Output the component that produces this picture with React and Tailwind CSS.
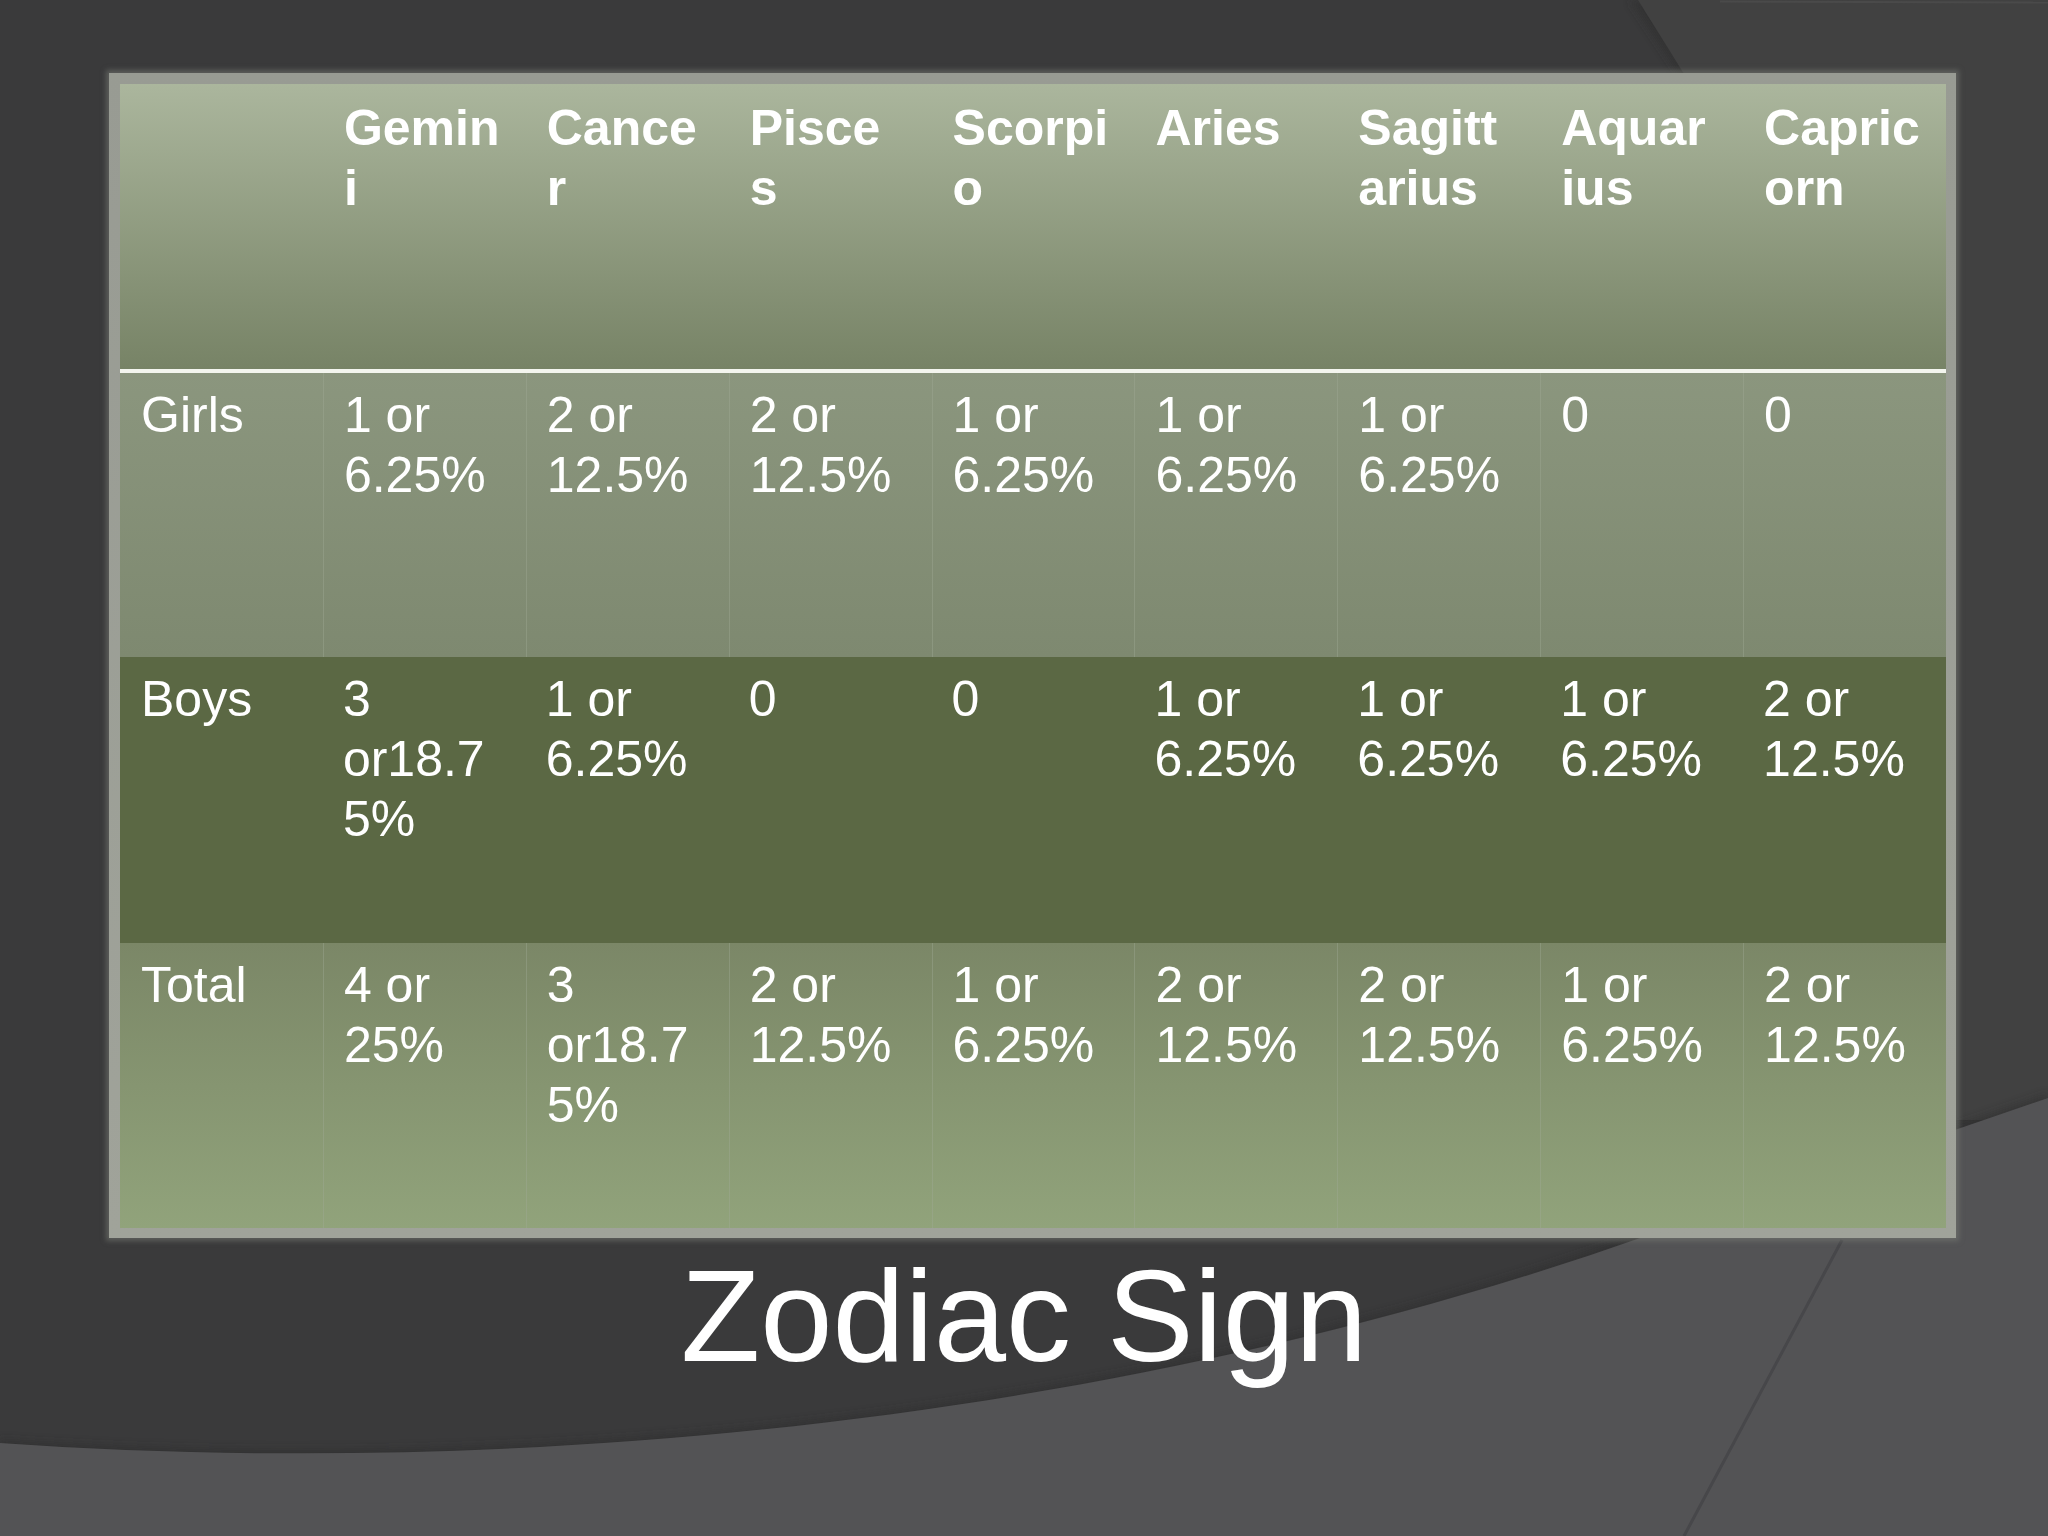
const columns = ['', 'Gemini', 'Cancer', 'Pisces', 'Scorpio', 'Aries', 'Sagittarius', 'Aquarius', 'Capricorn']

const rows = [
  {
    label: 'Girls',
    values: ['1 or 6.25%', '2 or 12.5%', '2 or 12.5%', '1 or 6.25%', '1 or 6.25%', '1 or 6.25%', '0', '0'],
    rowClass: 'h-[284px] bg-gradient-to-b from-[#8b967e] to-[#7e8970]',
    divided: true,
  },
  {
    label: 'Boys',
    values: ['3 or18.75%', '1 or 6.25%', '0', '0', '1 or 6.25%', '1 or 6.25%', '1 or 6.25%', '2 or 12.5%'],
    rowClass: 'h-[286px] bg-[#5b6844]',
    divided: false,
  },
  {
    label: 'Total',
    values: ['4 or 25%', '3 or18.75%', '2 or 12.5%', '1 or 6.25%', '2 or 12.5%', '2 or 12.5%', '1 or 6.25%', '2 or 12.5%'],
    rowClass: 'h-[285px] bg-gradient-to-b from-[#7b8767] to-[#91a37b]',
    divided: true,
  },
]

const Background = () => (
  <svg className="absolute inset-0" width="2048" height="1536" viewBox="0 0 2048 1536">
    <defs>
      <filter id="soft" x="-10%" y="-10%" width="120%" height="120%">
        <feGaussianBlur stdDeviation="4" />
      </filter>
    </defs>
    <rect width="2048" height="1536" fill="#3a3a3b" />
    {/* top right panel behind the table */}
    <polygon points="1630,0 2048,0 2048,1120 1950,1120 1950,90 1690,90" fill="#2f2f2f" opacity="0.6" filter="url(#soft)" />
    <polygon points="1638,0 2048,0 2048,1120 1955,1120 1955,90 1694,90" fill="#414141" />
    <line x1="1720" y1="1.5" x2="2048" y2="2.5" stroke="#4a4a4a" strokeWidth="2" />
    {/* lower sweep */}
    <path d="M0,1440 C500,1475 1100,1425 1640,1234 L2048,1094 L2048,1536 L0,1536 Z" fill="#2a2a2c" opacity="0.5" filter="url(#soft)" />
    <path d="M0,1443 C500,1478 1100,1428 1640,1238 L2048,1098 L2048,1536 L0,1536 Z" fill="#535355" />
    <line x1="1842" y1="1240" x2="1684" y2="1536" stroke="#47474a" strokeWidth="3" />
  </svg>
)

const App = () => {
  return (
    <div className="relative w-[2048px] h-[1536px] overflow-hidden bg-[#3a3a3b] font-['Liberation_Sans',Arial,sans-serif] text-white">
      <Background />

      <div className="relative flex flex-col pt-[73px] pl-[109px]">
        <div className="w-[1847px] p-[10px] pl-[11px] pt-[11px] bg-gradient-to-b from-[#989b93] to-[#a0a39a] shadow-[0_0_5px_3px_rgba(120,123,116,0.55)]">
          <div className="w-[1826px]">
            {/* header row */}
            <div className="grid grid-cols-9 h-[285px] bg-gradient-to-b from-[#abb69d] to-[#778366]">
              {columns.map((col, i) => (
                <div
                  key={i}
                  className="pl-[21px] pr-[25px] pt-[14px] text-[50px] leading-[60px] font-bold [overflow-wrap:break-word]"
                >
                  {col}
                </div>
              ))}
            </div>
            <div className="h-[4px] bg-[#f3f5ee]"></div>

            {rows.map((row) => (
              <div key={row.label} className={`grid grid-cols-9 ${row.rowClass}`}>
                <div className="pl-[21px] pr-[25px] pt-[12px] text-[50px] leading-[60px]">
                  {row.label}
                </div>
                {row.values.map((v, i) => (
                  <div
                    key={i}
                    className={`pl-[20px] pr-[26px] pt-[12px] text-[50px] leading-[60px] [overflow-wrap:break-word] ${
                      row.divided ? 'border-l border-[#a1aa95]/40' : ''
                    }`}
                  >
                    {v}
                  </div>
                ))}
              </div>
            ))}
          </div>
        </div>

        <h1 className="mt-[13px] w-[1830px] text-center text-[130px] leading-[130px] font-normal">
          Zodiac Sign
        </h1>
      </div>
    </div>
  )
}

export default App
